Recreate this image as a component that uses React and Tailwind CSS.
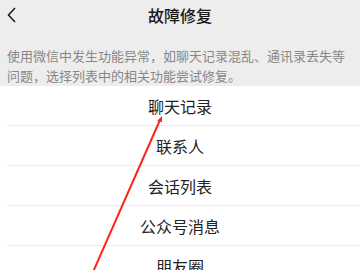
const items = ['聊天记录', '联系人', '会话列表', '公众号消息', '朋友圈'];

export default function App() {
  return (
    <div
      className="relative w-[360px] h-[270px] overflow-hidden bg-[#ededed]"
      style={{ fontFamily: '"Noto Sans CJK SC", "Noto Sans", sans-serif' }}
    >
      {/* Header */}
      <div className="relative h-[30px] flex items-center justify-center">
        <svg className="absolute left-[7px] top-[7px]" width="9" height="16" viewBox="0 0 9 16">
          <path d="M8 1 L1.5 8 L8 15" fill="none" stroke="#222" strokeWidth="1.6" />
        </svg>
        <h1 className="text-[16px] font-medium text-[#1a1a1a] leading-none">故障修复</h1>
      </div>

      {/* Description */}
      <p className="px-[7px] pt-[16px] text-[13px] leading-[20px] text-[#888]">
        使用微信中发生功能异常，如聊天记录混乱、通讯录丢失等问题，选择列表中的相关功能尝试修复。
      </p>

      {/* List */}
      <div className="bg-white">
        {items.map((item, i) => (
          <div key={item} className="pl-[7px]">
            <div
              className={`h-[40px] flex items-center justify-center pr-[7px] text-[16px] text-[#222] ${
                i < items.length - 1 ? 'border-b border-[#ececec]' : ''
              }`}
            >
              {item}
            </div>
          </div>
        ))}
      </div>

      {/* Red arrow annotation */}
      <svg className="absolute inset-0 pointer-events-none" width="360" height="270" viewBox="0 0 360 270">
        <line x1="93" y1="272" x2="160" y2="120" stroke="#ff2418" strokeWidth="2" />
        <path d="M162 116 L157 121 L162 122 Z" fill="#ff2418" />
      </svg>
    </div>
  );
}
